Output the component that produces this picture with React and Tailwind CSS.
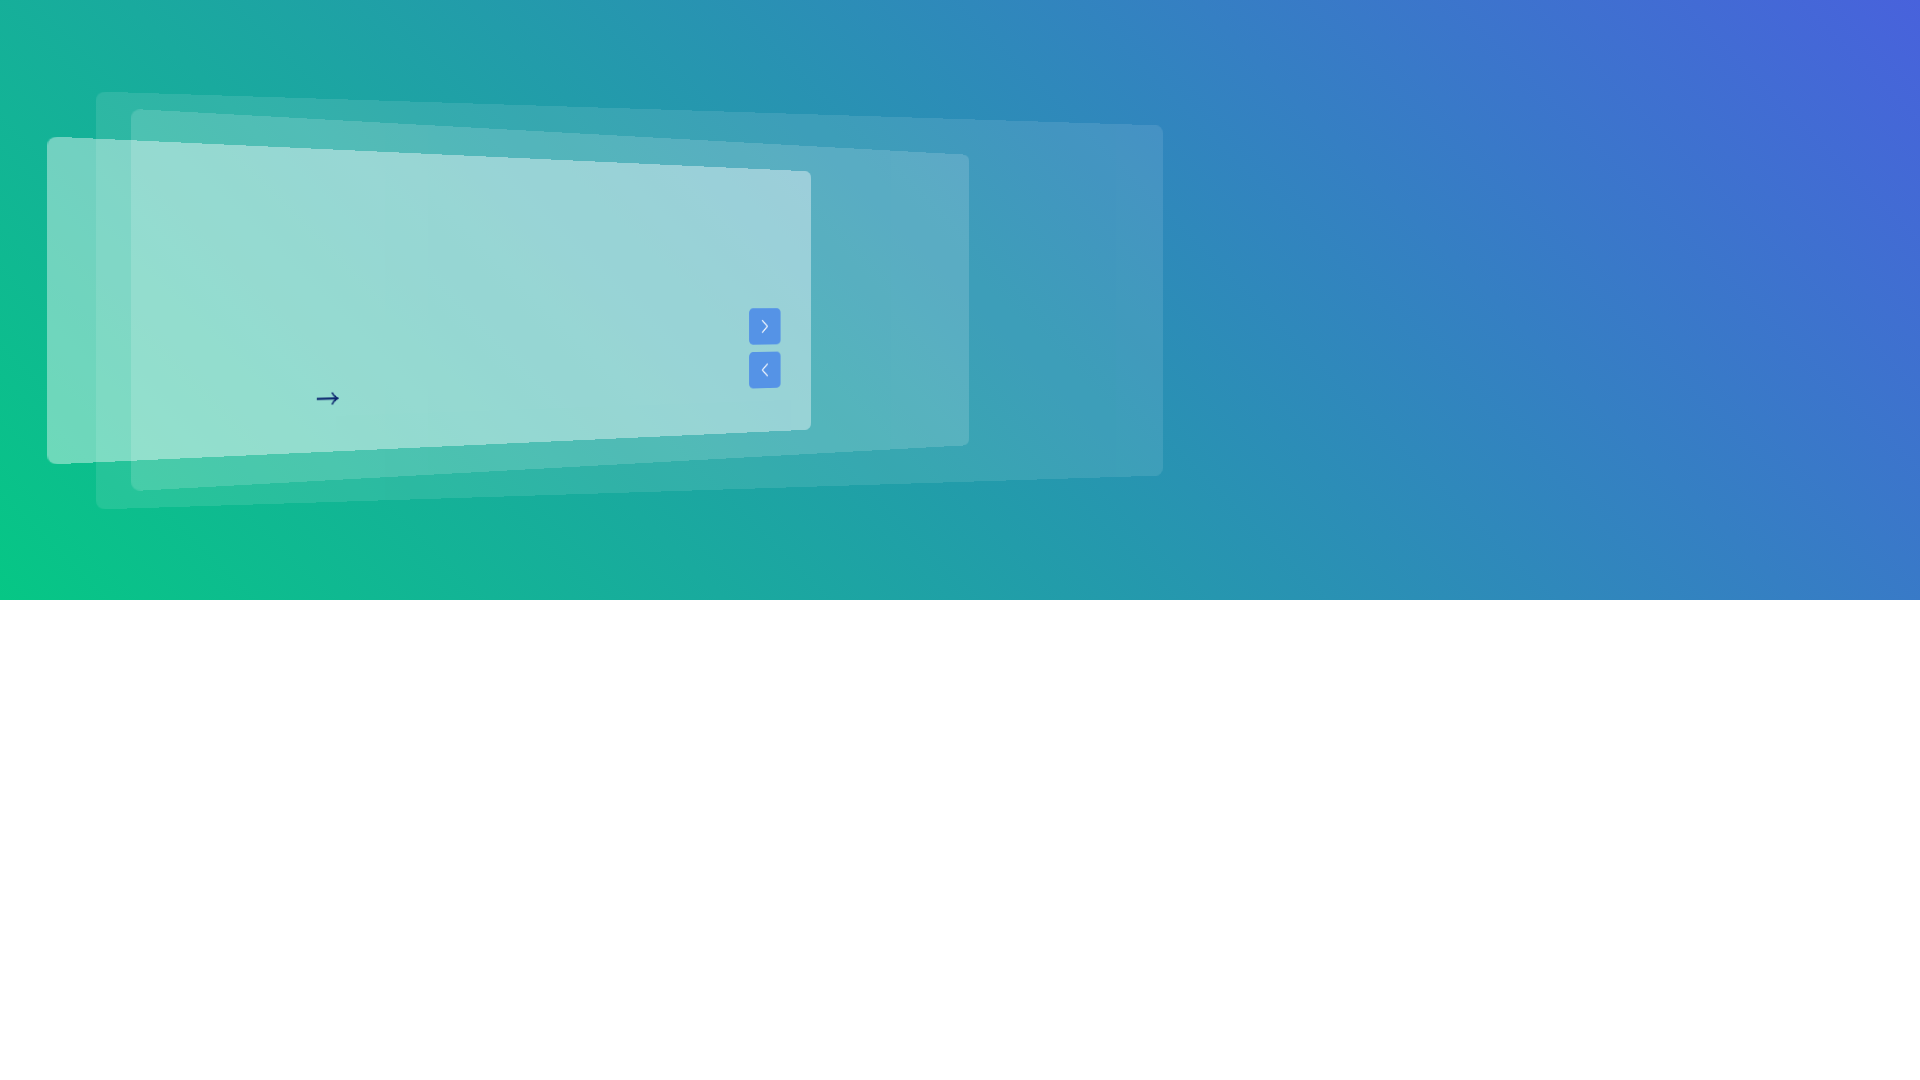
import { ChevronLeft, ChevronRight } from "lucide-react";

// stacked cards, tilted back with perspective
export default function App() {
  return (
    <div className="w-full bg-white font-['Liberation_Sans',sans-serif]">
      <section className="relative h-[600px] w-full overflow-hidden bg-[linear-gradient(45deg,#06c785,#4862dc)]">
        {/* back card */}
        <div className="absolute left-[140px] top-[110px] h-[381px] w-[1073px] rounded-lg bg-white/10 [transform:perspective(1000px)_rotateY(9.5deg)]" />
        {/* middle card */}
        <div className="absolute left-[174px] top-[135px] h-[330px] w-[867px] rounded-lg bg-white/15 [transform:perspective(1000px)_rotateY(18.4deg)]" />
        {/* front card */}
        <div className="absolute left-[80px] top-[156px] h-[289px] w-[790px] overflow-hidden rounded-lg bg-white/40 [transform:perspective(1000px)_rotateY(17.6deg)]">
          <div className="flex h-full items-end justify-between pb-12 pl-[236px] pr-10">
            <svg width="22" height="14" viewBox="0 0 22 14" fill="none" className="-mb-1 text-[#061f6a]">
              <path d="M1 7.2H20.5" stroke="currentColor" strokeWidth="2" />
              <path d="M15.5 1.5C16.8 4.3 18.4 6.1 21 7.2C18.4 8.3 16.8 10.1 15.5 13" stroke="currentColor" strokeWidth="1.5" />
            </svg>
            <div className="flex flex-col gap-2">
              <button className="flex h-10 w-10 items-center justify-center rounded-[5px] bg-[#5593e6] text-white">
                <ChevronRight size={26} strokeWidth={1.2} />
              </button>
              <button className="flex h-10 w-10 items-center justify-center rounded-[5px] bg-[#5593e6] text-white">
                <ChevronLeft size={26} strokeWidth={1.2} />
              </button>
            </div>
          </div>
        </div>
      </section>
    </div>
  );
}
